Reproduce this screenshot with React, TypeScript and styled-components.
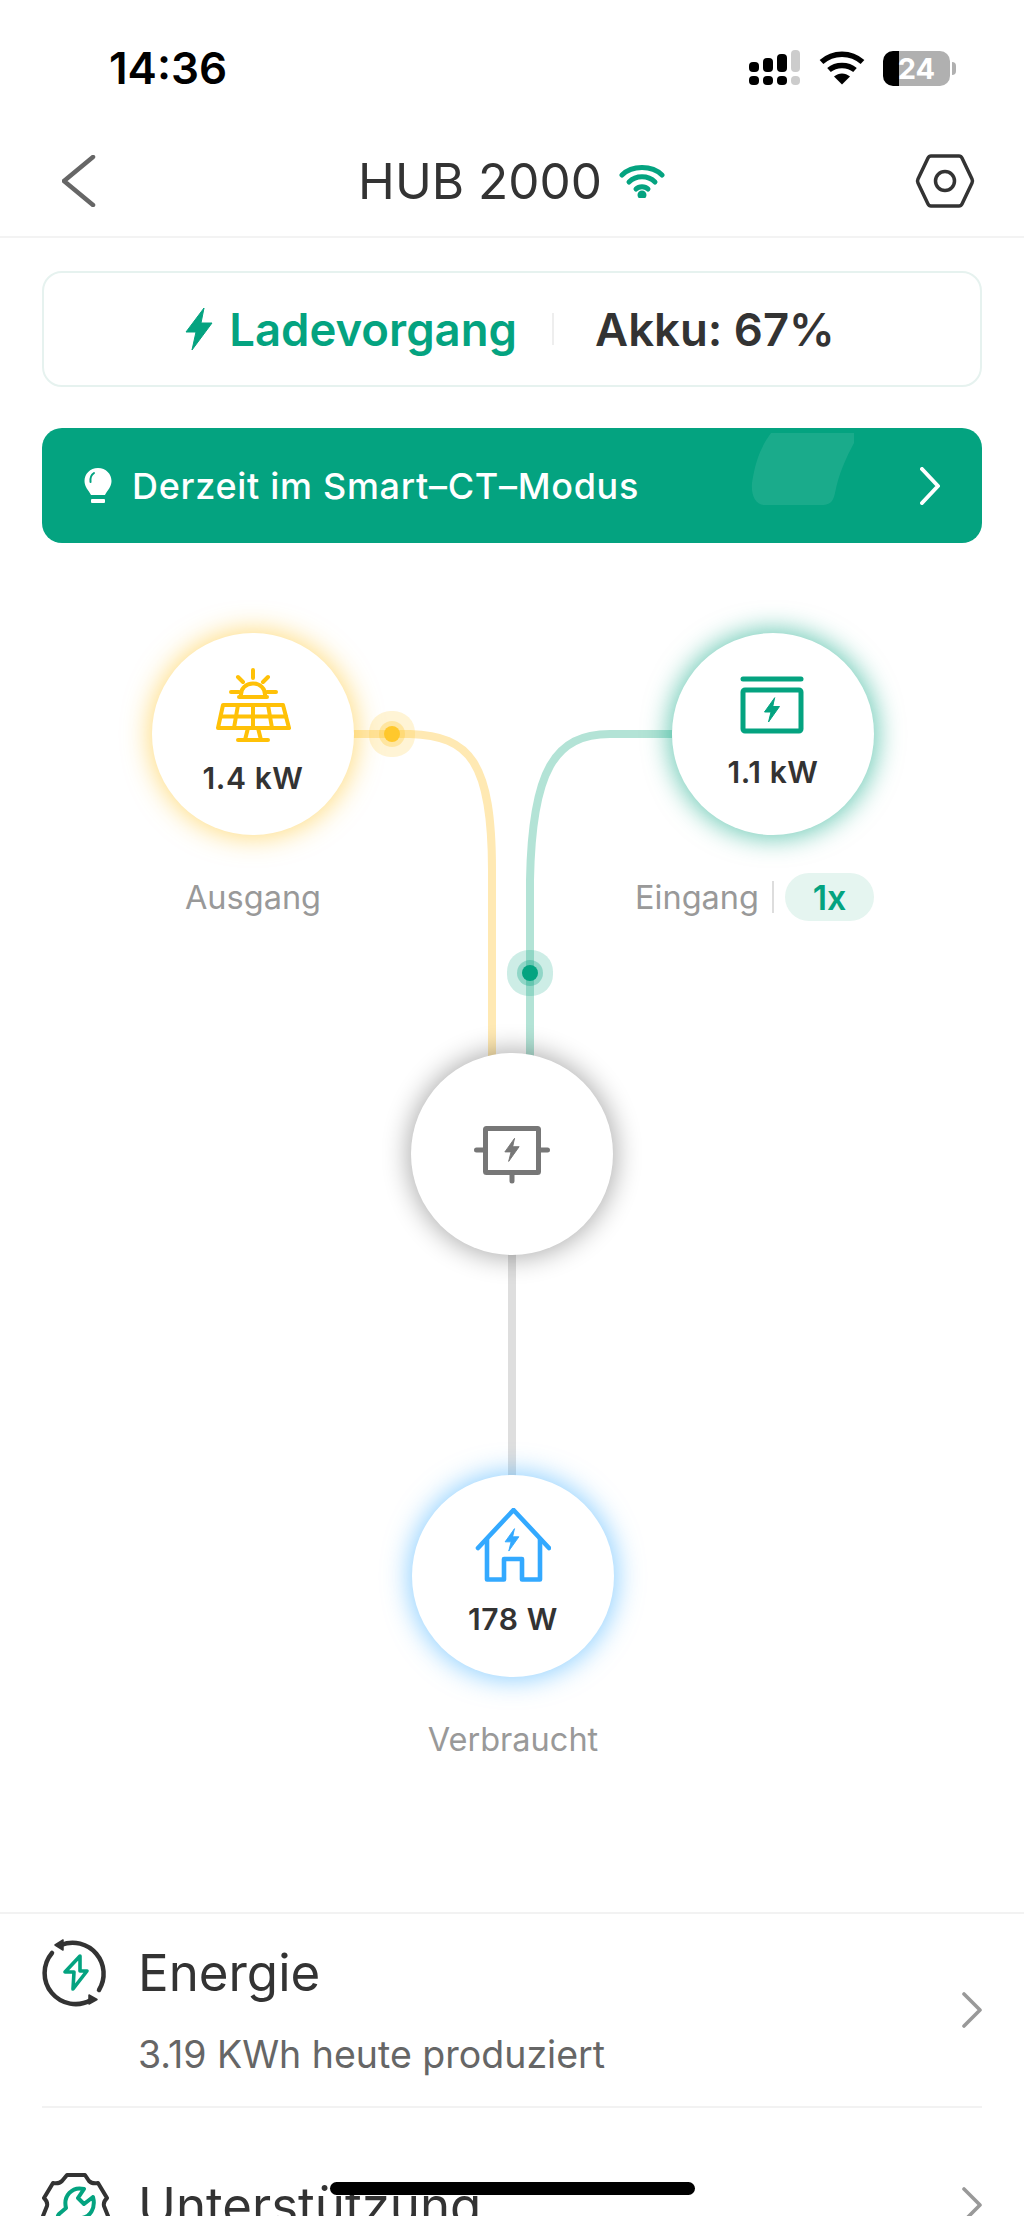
import * as React from "react";
import styled, { createGlobalStyle } from "styled-components";

const GREEN = "#04a380";
const YELLOW = "#ffc107";
const BLUE = "#33a9ff";

const Bolt = ({ cx, cy, s = 1, color }: { cx: number; cy: number; s?: number; color: string }) => (
  <path
    transform={`translate(${cx} ${cy}) scale(${s})`}
    d="M2.5 -12 L-7.5 2 H-1 L-3.5 12 L7.5 -3.5 H1 Z"
    fill={color}
    stroke={color}
    strokeWidth="1"
    strokeLinejoin="round"
  />
);

const SignalIcon = () => (
  <svg width="52" height="36" viewBox="749 50 52 36">
    <rect x="749" y="62" width="10" height="10" rx="4" fill="#000" />
    <rect x="763" y="58" width="10" height="14" rx="4" fill="#000" />
    <rect x="777" y="54" width="10" height="18" rx="4" fill="#000" />
    <rect x="791" y="50" width="9" height="22" rx="4" fill="#ccc" />
    <rect x="749" y="76" width="10" height="9" rx="4" fill="#000" />
    <rect x="763" y="76" width="10" height="9" rx="4" fill="#000" />
    <rect x="777" y="76" width="10" height="9" rx="4" fill="#000" />
    <rect x="791" y="76" width="9" height="9" rx="4" fill="#ccc" />
  </svg>
);

const StatusWifi = () => (
  <svg width="46" height="34" viewBox="0 0 46 34" fill="none" stroke="#000" strokeWidth="5.5">
    <path d="M2.5 11 C14 0.5 32 0.5 43.5 11" />
    <path d="M10 19 C17 13 29 13 36 19" />
    <path d="M23 33.5 L15 25.5 C20 21.5 26 21.5 31 25.5 Z" fill="#000" stroke="none" />
  </svg>
);

const BackIcon = () => (
  <svg width="34" height="52" viewBox="62 154 34 52" fill="none" stroke="#666" strokeWidth="4.5" strokeLinecap="round" strokeLinejoin="round">
    <path d="M93 156 L64 180 L93 204" />
  </svg>
);

const SettingsIcon = () => (
  <svg width="60" height="54" viewBox="916 154 60 54" fill="none" stroke="#333" strokeWidth="3.5" strokeLinejoin="round">
    <path d="M932 156 H960 Q962 156 963 158 L973 179 Q974 181 973 183 L963 204 Q962 206 960 206 H932 Q930 206 929 204 L919 183 Q918 181 919 179 L929 158 Q930 156 932 156 Z" />
    <circle cx="946" cy="181" r="9.5" />
  </svg>
);

const TitleWifi = () => (
  <svg width="46" height="34" viewBox="0 0 46 34" fill="none" stroke={GREEN} strokeWidth="5" strokeLinecap="round">
    <path d="M3 11 C13 1 33 1 43 11" />
    <path d="M10 18 C17 11 29 11 36 18" />
    <path d="M17 25 C20 22 26 22 29 25" />
    <circle cx="23" cy="31" r="2" fill={GREEN} />
  </svg>
);

const ChargeIcon = () => (
  <svg width="28" height="44" viewBox="0 0 28 44">
    <path d="M19 1 L1 25 H11 L7 43 L27 16 H16 Z" fill={GREEN} stroke={GREEN} strokeWidth="1" strokeLinejoin="round" />
  </svg>
);

const BulbIcon = () => (
  <svg width="28" height="36" viewBox="0 0 28 36">
    <path d="M14 0 C6 0 0.5 6 0.5 13 C0.5 19 4.5 22 7 27 H21 C23.5 22 27.5 19 27.5 13 C27.5 6 22 0 14 0 Z" fill="#fff" />
    <path d="M10 5 C7 7 6 10 6.5 14" stroke={GREEN} strokeWidth="2" fill="none" strokeLinecap="round" />
    <rect x="7" y="31" width="14" height="4" rx="1" fill="#fff" />
  </svg>
);

const Chevron = ({ color, w = 20, h = 38, sw = 4 }: { color: string; w?: number; h?: number; sw?: number }) => (
  <svg width={w} height={h} viewBox={`0 0 ${w} ${h}`} fill="none" stroke={color} strokeWidth={sw} strokeLinecap="round" strokeLinejoin="round">
    <path d={`M2 2 L${w - 2} ${h / 2} L2 ${h - 2}`} />
  </svg>
);

const SolarIcon = () => (
  <svg width="76" height="76" viewBox="214 667 76 76" fill="none" stroke={YELLOW} strokeWidth="4" strokeLinecap="round" strokeLinejoin="round">
    <path d="M252 670 V678 M237 677 L242 682 M267 677 L262 682 M230 692 H238 M266 692 H275" />
    <path d="M240 697 C238 679 266 679 264 697" />
    <path d="M238 697 H266" />
    <path d="M222 705 H282 L288 728 H217 Z" />
    <path d="M220 716.5 H285 M237 705 L233 728 M252 705 V728 M267 705 L271 728" />
    <path d="M247 728 L244 740 M257 728 L260 740 M237 740 H267" />
  </svg>
);

const BatteryIcon = () => (
  <svg width="66" height="60" viewBox="740 675 66 60" fill="none" stroke={GREEN} strokeWidth="5" strokeLinecap="round" strokeLinejoin="round">
    <path d="M743 679 H801" />
    <rect x="743" y="690" width="58" height="41" rx="2" />
    <Bolt cx={772} cy={710} color={GREEN} />
  </svg>
);

const InverterIcon = () => (
  <svg width="76" height="60" viewBox="474 1125 76 60" fill="none" stroke="#777" strokeWidth="5" strokeLinecap="round" strokeLinejoin="round">
    <rect x="485.5" y="1128.5" width="53" height="44" rx="1" />
    <path d="M476.5 1150 H485 M539 1150 H547.5 M512 1173 V1181" />
    <Bolt cx={512} cy={1150} s={0.95} color="#777" />
  </svg>
);

const HouseIcon = () => (
  <svg width="76" height="76" viewBox="474 1508 76 76" fill="none" stroke={BLUE} strokeWidth="4.6" strokeLinecap="round" strokeLinejoin="round">
    <path d="M477 1548 L512.5 1510 L548 1548" />
    <path d="M486 1539 V1579.5 H503 V1559 H521 V1579.5 H539 V1539" />
    <Bolt cx={511} cy={1540} s={0.92} color={BLUE} />
  </svg>
);

const EnergyIcon = () => (
  <svg width="64" height="64" viewBox="44 1940 64 64" overflow="visible" fill="none" stroke="#333" strokeWidth="4.5" strokeLinecap="round" strokeLinejoin="round">
    <path d="M61 1945 A31 31 0 0 1 99 1990" />
    <path d="M91 2000 A31 31 0 0 1 52 1953" />
    <path d="M55 1945 L63 1940 V1950 Z" fill="#333" strokeWidth="1.5" />
    <path d="M97 1999.5 L89 1995 V2004 Z" fill="#333" strokeWidth="1.5" />
    <path d="M80 1956 L65 1972 H74 L73 1989 L87 1971 H80 Z" stroke={GREEN} strokeWidth="3.6" />
  </svg>
);

const SupportIcon = () => (
  <svg width="64" height="64" viewBox="44 2173 64 64" overflow="visible" fill="none" stroke="#333" strokeWidth="4" strokeLinecap="round" strokeLinejoin="round">
    <path d="M67 2175 H85 L89 2181 Q92 2184 98 2183 L107 2198 Q103 2202 104 2206 L108 2216 L100 2232 H52 L43 2216 L47 2206 Q48 2202 44 2198 L53 2183 Q59 2184 62 2181 Z" />
    <path d="M84 2189 C72 2186 63 2196 66 2208 L59 2214 Q56 2218 60 2222 L66 2228 H76 L82 2218 C90 2217 96 2208 93 2197 L84 2204 L78 2198 Z" stroke={GREEN} />
  </svg>
);

export default function App() {
  return (
    <Page>
      <GlobalStyle />
      <StatusBar>
        <Time>14:36</Time>
        <StatusIcons>
          <SignalIcon />
          <StatusWifi />
          <Battery>24</Battery>
        </StatusIcons>
      </StatusBar>

      <NavBar>
        <BackIcon />
        <NavTitle>
          HUB 2000
          <TitleWifi />
        </NavTitle>
        <SettingsIcon />
      </NavBar>

      <StateCard>
        <ChargeIcon />
        <ChargeText>Ladevorgang</ChargeText>
        <StateDivider />
        <BatteryText>Akku: 67%</BatteryText>
      </StateCard>

      <ModeBanner>
        <BulbIcon />
        <ModeText>Derzeit im Smart–CT–Modus</ModeText>
        <BannerDecor width="106" height="76" viewBox="0 0 106 76">
          <path d="M20 0 H103 V10 C95 25 88 40 84 60 C82 70 78 72 70 72 H14 C4 72 0 62 1 50 C4 30 9 15 20 0 Z" fill="#fff" fillOpacity="0.09" />
        </BannerDecor>
        <Chevron color="#fff" />
      </ModeBanner>

      <Diagram>
        <Wires viewBox="0 543 1024 1369">
          <path d="M352 734 H410 C470 736 492 762 492 870 V1070" stroke="#ffe9b3" />
          <path d="M672 734 H610 C555 734 532 770 530 880 V1070" stroke="#b3e3d6" />
          <path d="M512 1240 V1490" stroke="#dedede" />
        </Wires>
        <FlowDot $x={392} $y={191} $rgb="255, 200, 44" />
        <FlowDot $x={530} $y={430} $rgb="4, 163, 128" />

        <Node $x={152} $y={90}>
          <Circle $glow="rgba(255, 193, 30, 0.55)" $pad={34}>
            <SolarIcon />
            <Value $gap={17}>1.4 kW</Value>
          </Circle>
          <Label>Ausgang</Label>
        </Node>

        <Node $x={672} $y={90}>
          <Circle $glow="rgba(4, 163, 128, 0.6)" $pad={42}>
            <BatteryIcon />
            <Value $gap={19}>1.1 kW</Value>
          </Circle>
          <Label>
            Eingang
            <LabelDivider />
            <CountPill>1x</CountPill>
          </Label>
        </Node>

        <Node $x={411} $y={510}>
          <Circle $glow="rgba(0, 0, 0, 0.32)" $pad={72}>
            <InverterIcon />
          </Circle>
        </Node>

        <Node $x={412} $y={932}>
          <Circle $glow="rgba(51, 169, 255, 0.55)" $pad={33}>
            <HouseIcon />
            <Value $gap={17}>178 W</Value>
          </Circle>
          <Label>Verbraucht</Label>
        </Node>
      </Diagram>

      <MenuList>
        <EnergyRow>
          <RowMain>
            <RowHead>
              <EnergyIcon />
              <RowTitle>Energie</RowTitle>
            </RowHead>
            <RowSub>3.19 KWh heute produziert</RowSub>
          </RowMain>
          <Chevron color="#999" w={20} h={36} sw={3.6} />
        </EnergyRow>
        <SupportRow>
          <RowHead>
            <SupportIcon />
            <RowTitle>Unterstützung</RowTitle>
          </RowHead>
          <Chevron color="#999" w={20} h={36} sw={3.6} />
        </SupportRow>
      </MenuList>

      <HomeIndicator />
    </Page>
  );
}

const GlobalStyle = createGlobalStyle`
  html, body {
    margin: 0;
    padding: 0;
    background: #fff;
    font-family: "Inter", "Noto Sans", sans-serif;
  }
`;

const Page = styled.div`
  position: relative;
  display: flex;
  flex-direction: column;
  width: 1024px;
  height: 2216px;
  overflow: hidden;
  background: #fff;

  & > * {
    flex-shrink: 0;
  }
`;

const StatusBar = styled.div`
  display: flex;
  align-items: center;
  justify-content: space-between;
  height: 36px;
  margin-top: 50px;
  padding: 0 74px 0 109px;
`;

const Time = styled.div`
  font-size: 44px;
  font-weight: 600;
  color: #000;
`;

const StatusIcons = styled.div`
  display: flex;
  align-items: center;
  gap: 18px;
`;

const Battery = styled.div`
  position: relative;
  width: 67px;
  height: 35px;
  border-radius: 10px;
  background: linear-gradient(90deg, #000 24%, #b0b0b0 24%);
  color: #fff;
  font-size: 29px;
  font-weight: 700;
  line-height: 35px;
  text-align: center;

  &::after {
    content: "";
    position: absolute;
    top: 11px;
    right: -6px;
    width: 4px;
    height: 13px;
    border-radius: 0 4px 4px 0;
    background: #b0b0b0;
  }
`;

const NavBar = styled.div`
  display: flex;
  align-items: center;
  justify-content: space-between;
  box-sizing: border-box;
  height: 114px;
  margin-top: 38px;
  padding: 2px 49px 0 62px;
  border-bottom: 2px solid #f3f3f3;
`;

const NavTitle = styled.div`
  display: flex;
  align-items: center;
  gap: 17px;
  margin-left: 12px;
  font-size: 49.5px;
  font-weight: 400;
  color: #333;
`;

const StateCard = styled.div`
  display: flex;
  align-items: center;
  justify-content: center;
  box-sizing: border-box;
  height: 116px;
  margin: 33px 42px 0;
  padding-right: 4px;
  border: 2.5px solid #e6f2ef;
  border-radius: 20px;
`;

const ChargeText = styled.div`
  margin-left: 16px;
  font-size: 45.5px;
  font-weight: 600;
  color: ${GREEN};
`;

const StateDivider = styled.div`
  width: 2px;
  height: 32px;
  margin: 0 41px 0 35px;
  background: #eee;
`;

const BatteryText = styled.div`
  font-size: 45.5px;
  font-weight: 600;
  color: #333;
`;

const ModeBanner = styled.div`
  position: relative;
  display: flex;
  align-items: center;
  box-sizing: border-box;
  height: 115px;
  margin: 41px 42px 0;
  padding: 0 42px 0 42px;
  border-radius: 20px;
  background: ${GREEN};
`;

const ModeText = styled.div`
  flex: 1;
  margin-left: 20px;
  font-size: 36px;
  font-weight: 500;
  letter-spacing: 0.7px;
  color: #fff;
`;

const BannerDecor = styled.svg`
  position: absolute;
  top: 5px;
  left: 709px;
`;

const Diagram = styled.div`
  position: relative;
  height: 1369px;
`;

const Wires = styled.svg`
  position: absolute;
  inset: 0;
  width: 100%;
  height: 100%;
  fill: none;
  stroke-width: 8;
`;

const FlowDot = styled.div<{ $x: number; $y: number; $rgb: string }>`
  position: absolute;
  left: ${(p) => p.$x - 8}px;
  top: ${(p) => p.$y - 8}px;
  width: 16px;
  height: 16px;
  border-radius: 50%;
  background: rgb(${(p) => p.$rgb});
  box-shadow: 0 0 0 5px rgba(${(p) => p.$rgb}, 0.3), 0 0 0 15px rgba(${(p) => p.$rgb}, 0.2);
`;

const Node = styled.div<{ $x: number; $y: number }>`
  position: absolute;
  left: ${(p) => p.$x}px;
  top: ${(p) => p.$y}px;
  display: flex;
  flex-direction: column;
  width: 202px;
`;

const Circle = styled.div<{ $glow: string; $pad: number }>`
  display: flex;
  flex-direction: column;
  align-items: center;
  box-sizing: border-box;
  width: 202px;
  height: 202px;
  padding-top: ${(p) => p.$pad}px;
  border-radius: 50%;
  background: #fff;
  box-shadow: 0 0 26px 3px ${(p) => p.$glow};
`;

const Value = styled.div<{ $gap: number }>`
  margin-top: ${(p) => p.$gap}px;
  font-size: 30px;
  font-weight: 600;
  line-height: 36px;
  letter-spacing: 0.6px;
  color: #333;
`;

const Label = styled.div`
  display: flex;
  align-items: center;
  justify-content: flex-end;
  align-self: center;
  height: 48px;
  margin-top: 38px;
  font-size: 32.5px;
  white-space: nowrap;
  color: #999;

  &:has(> span) {
    align-self: flex-end;
  }
`;

const LabelDivider = styled.i`
  width: 2px;
  height: 32px;
  margin: 0 11px 0 13px;
  background: #ddd;
`;

const CountPill = styled.span`
  display: flex;
  align-items: center;
  justify-content: center;
  width: 89px;
  height: 48px;
  border-radius: 24px;
  background: #e5f5f0;
  font-size: 34px;
  font-weight: 600;
  color: ${GREEN};
`;

const MenuList = styled.div`
  display: flex;
  flex-direction: column;
  border-top: 2px solid #f2f2f2;
  padding: 0 42px;
`;

const EnergyRow = styled.div`
  display: flex;
  align-items: center;
  justify-content: space-between;
  box-sizing: border-box;
  height: 194px;
  border-bottom: 2px solid #f2f2f2;
`;

const SupportRow = styled.div`
  display: flex;
  align-items: center;
  justify-content: space-between;
  margin-top: 65px;
`;

const RowMain = styled.div`
  display: flex;
  flex-direction: column;
  margin-bottom: 3px;
`;

const RowHead = styled.div`
  display: flex;
  align-items: center;
  gap: 30px;
  padding-left: 2px;
`;

const RowTitle = styled.div`
  font-size: 51px;
  color: #333;
`;

const RowSub = styled.div`
  margin-top: 28px;
  padding-left: 96px;
  font-size: 37.5px;
  color: #666;
`;

const HomeIndicator = styled.div`
  position: absolute;
  left: 330px;
  top: 2182px;
  width: 365px;
  height: 13px;
  border-radius: 7px;
  background: #000;
`;
